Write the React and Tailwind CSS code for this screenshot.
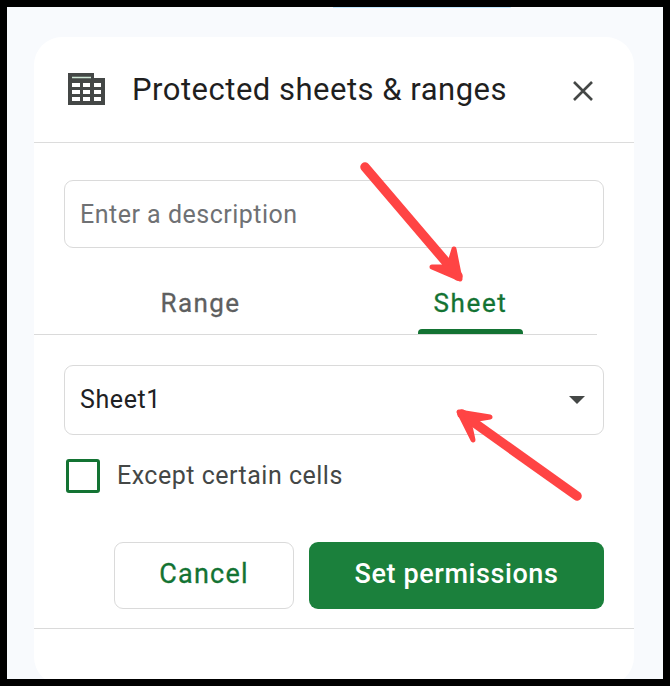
export default function App() {
  const font = { fontFamily: '"Roboto", "Noto Sans", sans-serif' };
  return (
    <div className="relative h-[686px] w-[670px] overflow-hidden bg-black p-[7px]" style={font}>
      <div className="relative h-[672px] w-[656px] overflow-hidden bg-[#f8fafd] pl-[27px] pt-[30px]">
        <div className="absolute left-[326px] top-0 h-[1px] w-[178px] rounded-br-md bg-[#c2e7ff]" />
        <div className="h-[648px] w-[600px] rounded-[28px] bg-white">
          <header className="flex h-[106px] items-center border-b border-[#dcdcdc] pl-[34px] pr-[42px]">
            <svg width="37" height="32" viewBox="0 0 37 32" className="mt-[-1px] shrink-0">
              <path d="M0 0h26v5h11v27H0z" fill="#444746" />
              <path d="M4 4.500h19" stroke="#cfe8d6" strokeWidth="1.500" />
              <g fill="#ffffff">
                <rect x="4" y="10" width="8" height="4" /><rect x="15" y="10" width="7" height="4" /><rect x="26" y="10" width="7" height="4" />
                <rect x="4" y="17" width="8" height="4" /><rect x="15" y="17" width="7" height="4" /><rect x="26" y="17" width="7" height="4" />
                <rect x="4" y="24" width="8" height="4" /><rect x="15" y="24" width="7" height="4" /><rect x="26" y="24" width="7" height="4" />
              </g>
            </svg>
            <h1 className="ml-[27px] flex-1 whitespace-nowrap text-[31px] leading-[40px] tracking-[0.5px] text-[#1f1f1f]">Protected sheets &amp; ranges</h1>
            <svg width="20" height="20" viewBox="0 0 20 20" className="mr-[-1px] mt-[2px] shrink-0" fill="none" stroke="#444746" strokeWidth="2.600">
              <path d="M1 1l18 18M19 1L1 19" />
            </svg>
          </header>

          <div className="pl-[30px] pt-[37px]">
            <input
              readOnly
              placeholder="Enter a description"
              className="h-[68px] w-[540px] rounded-[9px] border border-[#dadada] px-[15px] text-[25px] tracking-[0.5px] outline-none placeholder:text-[#6f7174]"
            />
          </div>

          <div className="mt-[28px] flex h-[59px] w-[563px] border-b border-[#dadada]">
            <div className="flex w-[333px] justify-center pt-[10px] text-[26px] leading-[34px] tracking-[1.400px] text-[#5e5f60] [-webkit-text-stroke:0.3px_#5e5f60]">Range</div>
            <div className="relative ml-[51px] flex w-[105px] justify-center pt-[10px] text-[26px] leading-[34px] tracking-[1.600px] text-[#137333] [-webkit-text-stroke:0.3px_#137333]">
              Sheet
              <div className="absolute bottom-0 left-0 h-[5px] w-[105px] rounded-t-[4px] bg-[#137333]" />
            </div>
          </div>

          <div className="pl-[30px] pt-[30px]">
            <div className="flex h-[70px] w-[540px] items-center justify-between rounded-[9px] border border-[#dadada] pl-[15px] pr-[18px]">
              <span className="text-[25px] tracking-[0.6px] text-[#202124]">Sheet1</span>
              <div className="h-0 w-0 border-x-[8px] border-t-[8px] border-x-transparent border-t-[#444746]" />
            </div>
            <div className="mt-[24px] flex items-center pl-[2px]">
              <div className="h-[34px] w-[34px] rounded-[3px] border-[3px] border-[#137333]" />
              <span className="ml-[17px] text-[25px] leading-[34px] tracking-[0.5px] text-[#444746]">Except certain cells</span>
            </div>
            <div className="mt-[49px] flex pl-[50px]">
              <button className="h-[67px] w-[180px] rounded-[9px] border border-[#dadada] bg-white pb-[2px] text-[27px] tracking-[1.200px] text-[#137333] [-webkit-text-stroke:0.3px_#137333]">Cancel</button>
              <button className="ml-[15px] h-[67px] w-[295px] rounded-[9px] bg-[#1b803c] pb-[2px] text-[27px] font-medium tracking-[0.6px] text-white">Set permissions</button>
            </div>
          </div>
          <div className="mt-[19px] border-t border-[#dadada]" />
        </div>
      </div>

      <svg className="pointer-events-none absolute left-0 top-0" width="670" height="686" fill="none" stroke="#ff4444" strokeWidth="9.500" strokeLinecap="round" strokeLinejoin="round">
        <path d="M365 167L458 276" />
        <path d="M432 267L460 279L454 249L451 259L443 267Z" strokeWidth="5" fill="#ff4444" />
        <path d="M577 496L462 414" />
        <path d="M490 417L459 412L473 440L470 426L478 419Z" strokeWidth="5" fill="#ff4444" />
      </svg>
    </div>
  );
}
